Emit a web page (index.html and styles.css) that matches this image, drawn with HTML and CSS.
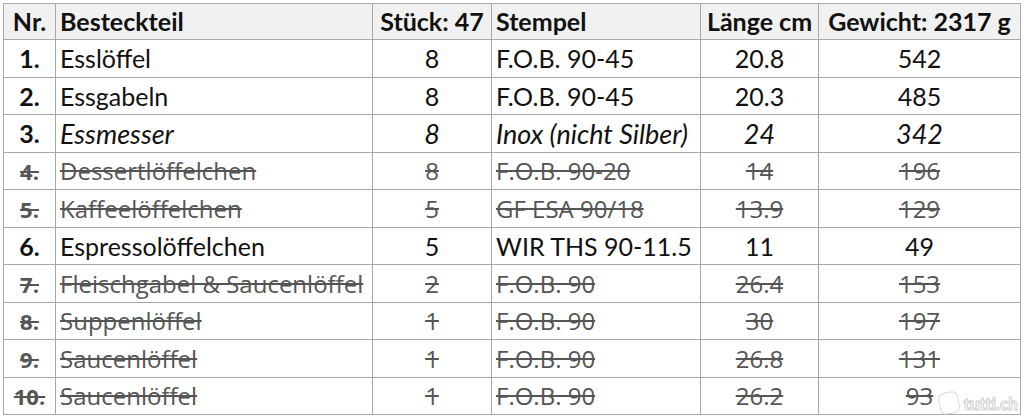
FILE: index.html
```html
<!DOCTYPE html>
<html lang="de">
<head>
<meta charset="utf-8">
<link rel="stylesheet" href="styles.css">
</head>
<body>
<div class="wrap">
<table class="tbl">
  <colgroup>
    <col class="c-nr"><col class="c-name"><col class="c-qty"><col class="c-stamp"><col class="c-len"><col class="c-wt">
  </colgroup>
  <thead>
    <tr class="r-head">
      <th class="nr">Nr.</th><th class="left">Besteckteil</th><th class="center">Stück: 47</th><th class="left">Stempel</th><th class="center">Länge cm</th><th class="center">Gewicht: 2317 g</th>
    </tr>
  </thead>
  <tbody>
    <tr class="r-a"><td class="nr">1.</td><td>Esslöffel</td><td class="center">8</td><td>F.O.B. 90-45</td><td class="center">20.8</td><td class="center">542</td></tr>
    <tr class="r-b"><td class="nr">2.</td><td>Essgabeln</td><td class="center">8</td><td>F.O.B. 90-45</td><td class="center">20.3</td><td class="center">485</td></tr>
    <tr class="r-a it"><td class="nr">3.</td><td>Essmesser</td><td class="center">8</td><td>Inox (nicht Silber)</td><td class="center">24</td><td class="center">342</td></tr>
    <tr class="r-b del"><td class="nr">4.</td><td>Dessertlöffelchen</td><td class="center">8</td><td>F.O.B. 90-20</td><td class="center">14</td><td class="center">196</td></tr>
    <tr class="r-a del"><td class="nr">5.</td><td>Kaffeelöffelchen</td><td class="center">5</td><td>GF ESA 90/18</td><td class="center">13.9</td><td class="center">129</td></tr>
    <tr class="r-b"><td class="nr">6.</td><td>Espressolöffelchen</td><td class="center">5</td><td>WIR THS 90-11.5</td><td class="center">11</td><td class="center">49</td></tr>
    <tr class="r-a del"><td class="nr">7.</td><td>Fleischgabel &amp; Saucenlöffel</td><td class="center">2</td><td>F.O.B. 90</td><td class="center">26.4</td><td class="center">153</td></tr>
    <tr class="r-b del"><td class="nr">8.</td><td>Suppenlöffel</td><td class="center">1</td><td>F.O.B. 90</td><td class="center">30</td><td class="center">197</td></tr>
    <tr class="r-a del"><td class="nr">9.</td><td>Saucenlöffel</td><td class="center">1</td><td>F.O.B. 90</td><td class="center">26.8</td><td class="center">131</td></tr>
    <tr class="r-b del"><td class="nr">10.</td><td>Saucenlöffel</td><td class="center">1</td><td>F.O.B. 90</td><td class="center">26.2</td><td class="center">93</td></tr>
  </tbody>
</table>
<div class="wm"><span class="wm-bubble"></span>tutti.ch</div>
</div>
</body>
</html>
```

FILE: styles.css
```css
html, body {
  margin: 0;
  padding: 0;
  background: #ffffff;
}
.wrap {
  position: relative;
  padding: 3px 0 0 3px;
  width: 1024px;
  height: 417px;
  box-sizing: border-box;
  overflow: hidden;
}
.tbl {
  border-collapse: collapse;
  table-layout: fixed;
  width: 1017px;
  font-family: "Lato", "Liberation Sans", sans-serif;
  font-size: 25px;
  color: #111;
}
.c-nr { width: 52px; }
.c-name { width: 317px; }
.c-qty { width: 119px; }
.c-stamp { width: 209px; }
.c-len { width: 118px; }
.c-wt { width: 202px; }

.tbl th, .tbl td {
  border: 1px solid #a8a8a8;
  padding: 0 4px;
  white-space: nowrap;
  overflow: hidden;
  text-align: left;
  line-height: 1;
}
.tbl th {
  background: #f1f1f1;
  font-weight: 700;
}
.r-head { height: 36px; }
.r-a { height: 38px; }
.r-b { height: 37px; }
.tbl .nr {
  text-align: center;
  font-weight: 700;
  padding: 0;
}
.tbl .center { text-align: center; }
.it td { font-style: italic; font-size: 27px; }
.it td.nr { font-style: normal; font-size: 25px; }
.del td {
  font-family: "Open Sans", "Noto Sans", sans-serif;
  font-size: 24px;
  color: #555555;
  text-decoration: line-through;
  text-decoration-thickness: 1.5px;
}
.del td.nr { font-weight: 700; font-size: 22px; }

.wm {
  position: absolute;
  right: 6px;
  bottom: 3px;
  display: flex;
  align-items: center;
  gap: 4px;
  font-family: "Lato", sans-serif;
  font-weight: 900;
  font-size: 17px;
  color: rgba(255,255,255,0.85);
  -webkit-text-stroke: 1px rgba(170,170,170,0.6);
}
.wm-bubble {
  width: 18px;
  height: 20px;
  border-radius: 6px;
  background: rgba(255,255,255,0.85);
  border: 1px solid rgba(190,190,190,0.6);
  transform: rotate(-12deg);
}
```
